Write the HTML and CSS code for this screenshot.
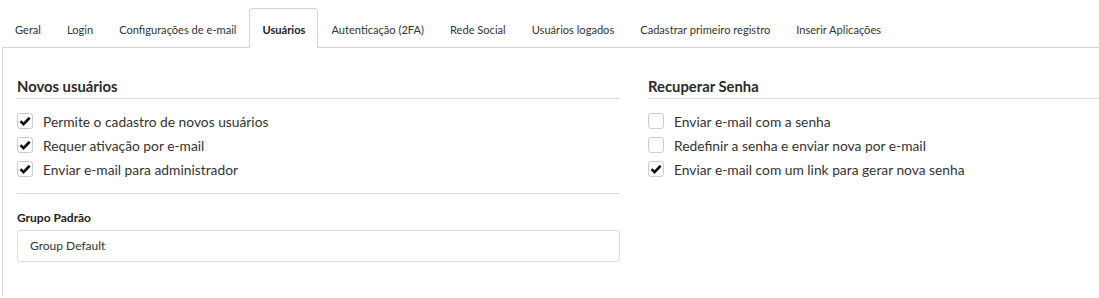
FILE: index.html
```html
<!DOCTYPE html>
<html lang="pt-BR">
<head>
    <meta charset="UTF-8">
    <meta name="viewport" content="width=device-width, initial-scale=1.0">
    <title>Configurações - Usuários</title>
    <link rel="stylesheet" href="styles.css">
</head>
<body>
    <div class="settings">
        <ul class="tabs">
            <li class="tab">Geral</li>
            <li class="tab">Login</li>
            <li class="tab">Configurações de e-mail</li>
            <li class="tab active">Usuários</li>
            <li class="tab">Autenticação (2FA)</li>
            <li class="tab">Rede Social</li>
            <li class="tab">Usuários logados</li>
            <li class="tab">Cadastrar primeiro registro</li>
            <li class="tab">Inserir Aplicações</li>
        </ul>

        <div class="panel">
            <div class="column">
                <h3 class="section-title">Novos usuários</h3>
                <label class="check"><span class="box"><svg viewBox="0 0 16 16"><path d="M2.8 8.2l3.5 3.5 7-7.4"/></svg></span>Permite o cadastro de novos usuários</label>
                <label class="check"><span class="box"><svg viewBox="0 0 16 16"><path d="M2.8 8.2l3.5 3.5 7-7.4"/></svg></span>Requer ativação por e-mail</label>
                <label class="check"><span class="box"><svg viewBox="0 0 16 16"><path d="M2.8 8.2l3.5 3.5 7-7.4"/></svg></span>Enviar e-mail para administrador</label>
                <hr class="divider">
                <div class="field-label">Grupo Padrão</div>
                <div class="select">Group Default</div>
            </div>

            <div class="column">
                <h3 class="section-title">Recuperar Senha</h3>
                <label class="check"><span class="box"></span>Enviar e-mail com a senha</label>
                <label class="check"><span class="box"></span>Redefinir a senha e enviar nova por e-mail</label>
                <label class="check"><span class="box"><svg viewBox="0 0 16 16"><path d="M2.8 8.2l3.5 3.5 7-7.4"/></svg></span>Enviar e-mail com um link para gerar nova senha</label>
            </div>
        </div>
    </div>
</body>
</html>
```

FILE: styles.css
```css
body {
    margin: 0;
    font-family: Lato, "Open Sans", Arial, sans-serif;
    color: #333;
    background-color: #fff;
    overflow: hidden;
}
.settings {
    padding: 8px 0 0 2px;
}
.tabs {
    display: flex;
    margin: 0;
    padding: 0;
    list-style: none;
}
.tab {
    height: 38px;
    line-height: 41px;
    padding: 0 12px;
    border: 1px solid transparent;
    border-bottom: none;
    font-size: 11.1px;
    color: #333;
    white-space: nowrap;
}
.tab.active {
    position: relative;
    z-index: 1;
    margin-bottom: -1px;
    height: 39px;
    border-color: #d4d4d4;
    border-radius: 4px 4px 0 0;
    background-color: #fff;
    font-weight: 700;
    color: #222;
}
.panel {
    display: grid;
    grid-template-columns: 603px 1fr;
    gap: 28px;
    height: 220px;
    padding: 28px 0 0 14px;
    border-top: 1px solid #d4d4d4;
    border-left: 1px solid #d4d4d4;
}
.section-title {
    margin: 0 0 10px;
    padding-bottom: 2px;
    border-bottom: 1px solid #ddd;
    font-size: 14.8px;
    line-height: 20px;
    font-weight: 700;
    color: #2a2a2a;
}
.check {
    display: flex;
    align-items: center;
    height: 24px;
    font-size: 13.8px;
    color: #333;
}
.box {
    display: inline-flex;
    flex-shrink: 0;
    width: 14px;
    height: 14px;
    margin-right: 10px;
    border: 1px solid #ccc;
    border-radius: 3px;
    background-color: #fff;
}
.box svg {
    width: 14px;
    height: 14px;
    fill: none;
    stroke: #111;
    stroke-width: 3;
}
.divider {
    margin: 12px 0 0;
    border: none;
    border-top: 1px solid #ddd;
}
.field-label {
    margin-top: 16px;
    font-size: 12px;
    line-height: 16px;
    font-weight: 700;
    color: #222;
}
.select {
    margin-top: 4px;
    height: 30px;
    line-height: 30px;
    padding: 0 12px;
    border: 1px solid #ddd;
    border-radius: 3px;
    font-size: 12px;
    color: #333;
}
```
